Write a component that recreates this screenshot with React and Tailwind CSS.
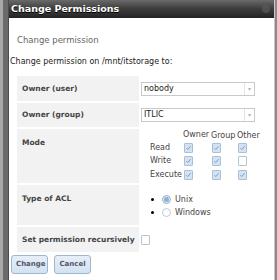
import React from "react";

const font = { fontFamily: '"DejaVu Sans", Verdana, sans-serif' };

function Check({ on }) {
  if (!on)
    return <span className="block w-[9px] h-[10px] border border-[#b9c3cd] bg-white rounded-[1px]" />;
  return (
    <span className="block w-[9px] h-[10px] border border-[#a9c0d8] bg-[#d5e3f1] rounded-[1px] relative">
      <svg viewBox="0 0 9 10" className="absolute inset-0 w-full h-full">
        <path d="M1.8 5.2 L3.6 7 L7.2 2.6" fill="none" stroke="#6f9bcb" strokeWidth="1.2" />
      </svg>
    </span>
  );
}

function Radio({ on }) {
  return (
    <span className={"flex items-center justify-center w-[9px] h-[9px] rounded-full border " + (on ? "border-[#9bb3cc] bg-[#dfe9f4]" : "border-[#c3c9cf] bg-white")}>
      {on ? <span className="block w-[5px] h-[5px] rounded-full bg-[#8fb0d3]" /> : null}
    </span>
  );
}

function Select({ value }) {
  return (
    <div className="flex w-[114px] h-[14px] border border-[#c9c9c9] bg-white items-center">
      <span className="flex-1 pl-[2px] text-[8px] text-[#222] leading-none">{value}</span>
      <span className="w-[10px] h-full border-l border-[#e3e3e3] flex items-center justify-center text-[6px] text-[#b5b5b5]">▾</span>
    </div>
  );
}

export default function App() {
  return (
    <div className="w-[277px] h-[280px] flex bg-white overflow-hidden" style={font}>
      <div className="w-[3px] h-full bg-[#a9a9a9]" />
      <div className="w-[5px] h-full bg-[#6b6b6b]" />
      <div className="w-[1px] h-full bg-[#4b4b4b]" />
      <div className="flex-1 flex flex-col">
        <div className="h-[18px] bg-gradient-to-b from-[#6a6a6a] via-[#3c3c3c] to-[#242424] flex items-center pl-[2px] pr-[4px]">
          <span className="text-white font-bold text-[9.5px] leading-none flex-1" style={{ textShadow: "0 1px 0 #000" }}>Change Permissions</span>
          <span className="w-[8px] h-[8px] rounded-full bg-[#5a5a5a] opacity-70" />
        </div>
        <div className="h-[16px]" />
        <div className="pl-[8px] text-[8.5px] text-[#666] leading-none h-[12px] pt-[2px]">Change permission</div>
        <div className="h-[12px]" />
        <div className="pl-[1px] text-[8px] text-[#222] leading-none h-[10px]">Change permission on /mnt/itstorage to:</div>
        <div className="h-[8px]" />
        <div className="ml-[8px] grid grid-cols-[122px_1fr] gap-y-[2px] gap-x-[2px] text-[7.5px] leading-none">
          <div className="h-[25px] bg-[#f2f2f2] pl-[5px] flex items-center font-bold text-[#444]">Owner (user)</div>
          <div className="flex items-center"><Select value="nobody" /></div>
          <div className="h-[24px] bg-[#f2f2f2] pl-[5px] flex items-center font-bold text-[#444]">Owner (group)</div>
          <div className="flex items-center"><Select value="ITLIC" /></div>
          <div className="h-[54px] bg-[#f2f2f2] pl-[5px] pt-[10px] font-bold text-[#444]">Mode</div>
          <div className="pt-[2px] pl-[9px] text-[#444] text-[8px]">
            <div className="grid grid-cols-[33px_28px_26px_26px] items-center">
              <span />
              <span className="h-[10px]">Owner</span>
              <span>Group</span>
              <span>Other</span>
              {[["Read", [1, 1, 1]], ["Write", [1, 1, 0]], ["Execute", [1, 1, 1]]].map(([l, v]) => (
                <React.Fragment key={l}>
                  <span className="h-[13.5px] flex items-center">{l}</span>
                  {v.map((c, i) => (
                    <span key={i} className="flex items-center pl-[1px]"><Check on={!!c} /></span>
                  ))}
                </React.Fragment>
              ))}
            </div>
          </div>
          <div className="h-[40px] bg-[#f2f2f2] pl-[5px] pt-[10px] font-bold text-[#444]">Type of ACL</div>
          <div className="pt-[8px] pl-[10px] text-[#444] text-[8px]">
            {[["Unix", true], ["Windows", false]].map(([l, on]) => (
              <div key={l} className="flex items-center h-[13px]">
                <span className="w-[3px] h-[3px] rounded-full bg-black mr-[8px]" />
                <Radio on={on} />
                <span className="ml-[4px]">{l}</span>
              </div>
            ))}
          </div>
          <div className="h-[25px] bg-[#f2f2f2] pl-[5px] flex items-center font-bold text-[#444] whitespace-nowrap">Set permission recursively</div>
          <div className="flex items-center"><Check on={false} /></div>
        </div>
        <div className="flex gap-[6px] pl-[2px] pt-[3px]">
          {["Change", "Cancel"].map((b) => (
            <button key={b} className="h-[19px] px-[4px] rounded-[3px] border border-[#9fb6cf] bg-gradient-to-b from-[#e6eff8] to-[#d3e2f2] text-[7px] font-bold text-[#556] leading-none w-[37px]">{b}</button>
          ))}
        </div>
      </div>
      <div className="w-[1px] h-full bg-[#c8c8c8]" />
      <div className="w-[2px] h-full bg-[#8a8a8a]" />
    </div>
  );
}
